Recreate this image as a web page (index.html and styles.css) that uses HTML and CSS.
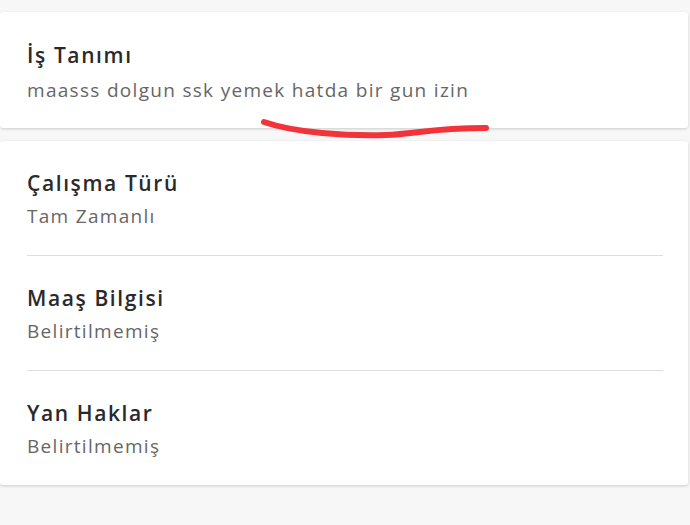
FILE: index.html
```html
<!DOCTYPE html>
<html lang="tr">

<head>
    <meta charset="UTF-8">
    <meta name="viewport" content="width=device-width, initial-scale=1.0">
    <title>İlan Detayı</title>
    <link rel="stylesheet" href="styles.css">
</head>

<body>
    <div class="page">
        <div class="card card-single">
            <div class="row">
                <h3 class="row-title">İş Tanımı</h3>
                <p class="row-value">maasss dolgun ssk yemek hatda bir gun izin</p>
            </div>
            <!-- red marker stroke drawn over the card -->
            <svg class="marker" width="240" height="24" viewBox="0 0 240 24">
                <path d="M8 5 C 40 16, 90 19, 130 18 C 160 17, 175 11, 230 11" fill="none" stroke="#f2333a" stroke-width="6" stroke-linecap="round" />
            </svg>
        </div>

        <div class="card">
            <div class="row">
                <h3 class="row-title">Çalışma Türü</h3>
                <p class="row-value">Tam Zamanlı</p>
            </div>
            <div class="row">
                <h3 class="row-title">Maaş Bilgisi</h3>
                <p class="row-value">Belirtilmemiş</p>
            </div>
            <div class="row">
                <h3 class="row-title">Yan Haklar</h3>
                <p class="row-value">Belirtilmemiş</p>
            </div>
        </div>
    </div>
</body>

</html>
```

FILE: styles.css
```css
* {
    margin: 0;
    padding: 0;
    box-sizing: border-box;
}

body {
    font-family: 'Open Sans', 'Noto Sans', sans-serif;
    background: #f7f7f7;
    color: #2b2b2b;
    width: 690px;
    height: 525px;
    overflow: hidden;
}

.page {
    display: flex;
    flex-direction: column;
    gap: 13px;
    padding-top: 12px;
    padding-right: 2px;
}

.card {
    position: relative;
    background: #fff;
    border-radius: 3px;
    box-shadow: 0 1px 3px rgba(0, 0, 0, 0.18);
    padding: 0 25px 0 27px;
}

.row {
    padding: 29px 0 27px;
    border-bottom: 1px solid #dedede;
}

.row:last-of-type {
    border-bottom: none;
}

.card-single .row {
    padding: 30px 0 26px;
}

.row-title {
    font-size: 21px;
    line-height: 26px;
    font-weight: 600;
    letter-spacing: 1.6px;
    color: #2a2a2a;
    margin-bottom: 8px;
}

.card-single .row-title {
    margin-bottom: 10px;
}

.row-value {
    font-size: 19px;
    line-height: 24px;
    letter-spacing: 1.3px;
    color: #666;
}

.marker {
    position: absolute;
    left: 256px;
    top: 105px;
}
```
